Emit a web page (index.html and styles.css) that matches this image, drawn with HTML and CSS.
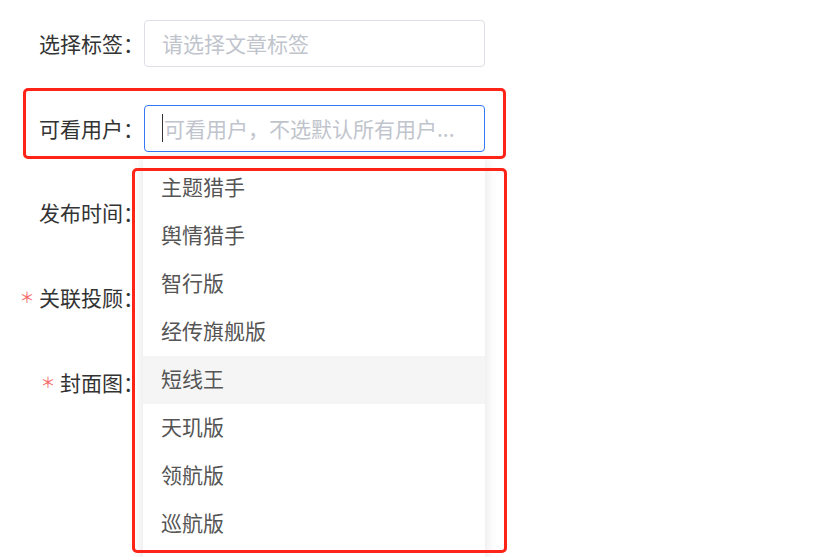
FILE: index.html
```html
<!DOCTYPE html>
<html lang="zh-CN">
<head>
    <meta charset="UTF-8">
    <title>文章设置</title>
    <link rel="stylesheet" href="styles.css">
</head>
<body>
    <form class="form">
        <div class="form-item">
            <label class="form-label">选择标签：</label>
            <div class="input">
                <span class="placeholder">请选择文章标签</span>
            </div>
        </div>

        <div class="form-item">
            <label class="form-label">可看用户：</label>
            <div class="input is-focus">
                <span class="caret"></span><span class="placeholder">可看用户，不选默认所有用户...</span>
            </div>
        </div>

        <div class="form-item">
            <label class="form-label">发布时间：</label>
        </div>

        <div class="form-item">
            <label class="form-label is-required">关联投顾：</label>
        </div>

        <div class="form-item">
            <label class="form-label is-required">封面图：</label>
        </div>

        <!-- dropdown for 可看用户 -->
        <div class="dropdown">
            <ul class="dropdown-list">
                <li class="dropdown-item">主题猎手</li>
                <li class="dropdown-item">舆情猎手</li>
                <li class="dropdown-item">智行版</li>
                <li class="dropdown-item">经传旗舰版</li>
                <li class="dropdown-item hover">短线王</li>
                <li class="dropdown-item">天玑版</li>
                <li class="dropdown-item">领航版</li>
                <li class="dropdown-item">巡航版</li>
            </ul>
        </div>

        <!-- annotation boxes -->
        <div class="mark mark-field"></div>
        <div class="mark mark-list"></div>
    </form>
</body>
</html>
```

FILE: styles.css
```css
body {
    font-family: "Noto Sans CJK SC", "Noto Sans", sans-serif;
    margin: 0;
    padding: 0;
    background-color: #fff;
    color: #333;
}

.form {
    position: relative;
    padding-top: 20px;
    height: 537px;
    overflow: hidden;
}

.form-item {
    display: flex;
    align-items: center;
    height: 47px;
    margin-bottom: 37.5px;
}

.form-label {
    width: 144px;
    text-align: right;
    font-size: 21px;
    line-height: 45px;
    color: #333;
    flex-shrink: 0;
}

.form-label.is-required::before {
    content: "＊";
    font-size: 15px;
    vertical-align: 3px;
    color: #f56c6c;
    margin-right: 4.5px;
}

.input {
    box-sizing: border-box;
    width: 341px;
    height: 47px;
    padding: 0 17px;
    border: 1px solid #dcdfe6;
    border-radius: 4px;
    display: flex;
    align-items: center;
    font-size: 21px;
    line-height: 45px;
}

.input.is-focus {
    border-color: #3478f6;
}

.placeholder {
    color: #c0c4cc;
    white-space: nowrap;
}

.caret {
    display: inline-block;
    width: 1px;
    height: 28px;
    background-color: #333;
    margin-right: 1px;
}

.dropdown {
    position: absolute;
    left: 143px;
    top: 157px;
    width: 342px;
    height: 410px;
    background-color: #fff;
    box-shadow: 0 2px 12px rgba(0, 0, 0, 0.12);
    overflow: hidden;
}

.dropdown-list {
    list-style: none;
    margin: 0;
    padding: 7px 0 0;
}

.dropdown-item {
    height: 48px;
    line-height: 44px;
    padding-left: 18px;
    font-size: 21px;
    color: #555;
}

.dropdown-item.hover {
    background-color: #f5f5f5;
}

.mark {
    position: absolute;
    box-sizing: border-box;
    border: 3px solid #ff2418;
    border-radius: 5px;
}

.mark-field {
    left: 23px;
    top: 88px;
    width: 483px;
    height: 71px;
}

.mark-list {
    left: 132px;
    top: 168px;
    width: 375px;
    height: 385px;
}
```
